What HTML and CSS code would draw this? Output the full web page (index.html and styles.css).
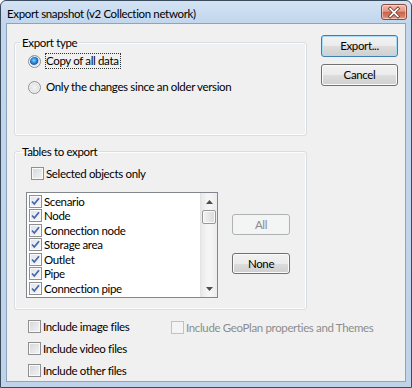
FILE: index.html
```html
<!DOCTYPE html>
<html>
<head>
<meta charset="utf-8">
<link rel="stylesheet" href="styles.css">
</head>
<body>
<div class="window">
  <div class="titlebar">
    <span class="title">Export snapshot (v2 Collection network)</span>
    <span class="close">
      <svg width="25" height="15" viewBox="0 0 25 15">
        <path d="M8.5 3.5 L16.5 11.5 M16.5 3.5 L8.5 11.5" stroke="#6b3a30" stroke-width="3.4" stroke-linecap="square"/>
        <path d="M8.5 3.5 L16.5 11.5 M16.5 3.5 L8.5 11.5" stroke="#ffffff" stroke-width="1.8" stroke-linecap="square"/>
      </svg>
    </span>
  </div>
  <div class="client">
    <div class="main">
      <div class="left">
        <fieldset class="group g1">
          <legend>Export type</legend>
          <div class="g1-body">
            <div class="opt-row"><span class="radio on"></span><span class="lbl focus">Copy of all data</span></div>
            <div class="opt-row second"><span class="radio"></span><span class="lbl">Only the changes since an older version</span></div>
          </div>
        </fieldset>
        <fieldset class="group g2">
          <legend>Tables to export</legend>
          <div class="g2-body">
            <div class="sel-row"><span class="chk"></span><span class="sel-lbl">Selected objects only</span></div>
            <div class="list-area">
              <div class="listbox">
                <div class="items">
                  <div class="item"><span class="chk on"><svg width="11" height="11" viewBox="0 0 11 11"><path d="M2 5.5 L4.3 8 L9 2.2" fill="none" stroke="#4864a8" stroke-width="1.7"/></svg></span>Scenario</div>
                  <div class="item"><span class="chk on"><svg width="11" height="11" viewBox="0 0 11 11"><path d="M2 5.5 L4.3 8 L9 2.2" fill="none" stroke="#4864a8" stroke-width="1.7"/></svg></span>Node</div>
                  <div class="item"><span class="chk on"><svg width="11" height="11" viewBox="0 0 11 11"><path d="M2 5.5 L4.3 8 L9 2.2" fill="none" stroke="#4864a8" stroke-width="1.7"/></svg></span>Connection node</div>
                  <div class="item"><span class="chk on"><svg width="11" height="11" viewBox="0 0 11 11"><path d="M2 5.5 L4.3 8 L9 2.2" fill="none" stroke="#4864a8" stroke-width="1.7"/></svg></span>Storage area</div>
                  <div class="item"><span class="chk on"><svg width="11" height="11" viewBox="0 0 11 11"><path d="M2 5.5 L4.3 8 L9 2.2" fill="none" stroke="#4864a8" stroke-width="1.7"/></svg></span>Outlet</div>
                  <div class="item"><span class="chk on"><svg width="11" height="11" viewBox="0 0 11 11"><path d="M2 5.5 L4.3 8 L9 2.2" fill="none" stroke="#4864a8" stroke-width="1.7"/></svg></span>Pipe</div>
                  <div class="item"><span class="chk on"><svg width="11" height="11" viewBox="0 0 11 11"><path d="M2 5.5 L4.3 8 L9 2.2" fill="none" stroke="#4864a8" stroke-width="1.7"/></svg></span>Connection pipe</div>
                </div>
                <div class="vscroll">
                  <div class="arrow up"><svg width="7" height="4" viewBox="0 0 7 4"><path d="M0 4 L3.5 0 L7 4 Z" fill="#4d4d4d"/></svg></div>
                  <div class="track"><div class="thumb"></div></div>
                  <div class="arrow down"><svg width="7" height="4" viewBox="0 0 7 4"><path d="M0 0 L7 0 L3.5 4 Z" fill="#4d4d4d"/></svg></div>
                </div>
              </div>
              <div class="list-buttons">
                <button class="btn small disabled">All</button>
                <button class="btn small">None</button>
              </div>
            </div>
          </div>
        </fieldset>
      </div>
      <div class="right">
        <button class="btn big default">Export...</button>
        <button class="btn big">Cancel</button>
      </div>
    </div>
    <div class="bottom-opts">
      <div class="b-row"><span class="chk"></span><span class="b-lbl">Include image files</span></div>
      <div class="b-row geo"><span class="chk dis"></span><span class="b-lbl grey">Include GeoPlan properties and Themes</span></div>
      <div class="b-row"><span class="chk"></span><span class="b-lbl">Include video files</span></div>
      <div class="b-row empty"></div>
      <div class="b-row"><span class="chk"></span><span class="b-lbl">Include other files</span></div>
    </div>
  </div>
</div>
</body>
</html>
```

FILE: styles.css
```css
* { box-sizing: border-box; }
html, body { margin: 0; padding: 0; }
body {
  width: 412px;
  height: 388px;
  overflow: hidden;
  font-family: Lato, "Liberation Sans", sans-serif;
  font-size: 11.5px;
  letter-spacing: -0.35px;
  color: #000;
  background: #fff;
}
.window {
  width: 412px;
  height: 388px;
  border: 1px solid #3b4b5e;
  border-radius: 6px 6px 0 0;
  background: linear-gradient(#d3e3f4 0px, #c2d6ec 22px, #bfd4ea 100%);
  padding: 0 5px 5px 5px;
  display: flex;
  flex-direction: column;
}
.titlebar {
  height: 22px;
  display: flex;
  align-items: flex-start;
  justify-content: space-between;
  margin: 0 -5px;
  padding: 0 4px 0 6px;
}
.title {
  line-height: 22px;
  padding-top: 2px;
  white-space: nowrap;
}
.close {
  margin-top: 3px;
  width: 26px;
  height: 16px;
  border: 1px solid #8a4a3e;
  border-radius: 3px;
  background: linear-gradient(#efb8a8 0%, #e39a86 45%, #c8614a 50%, #d77c63 80%, #e6a28d 100%);
  box-shadow: inset 0 0 0 1px rgba(255,255,255,0.45);
  display: flex;
  align-items: center;
  justify-content: center;
}
.close svg { display: block; }
.client {
  flex: 1;
  border: 1px solid #8ea3bd;
  background: #f0f0f0;
  padding: 11px 0 0 7px;
}
.main {
  display: flex;
  align-items: flex-start;
}
.left {
  width: 293px;
  display: flex;
  flex-direction: column;
}
.group {
  margin: 0;
  padding: 0;
  border: 1px solid #d5dfe5;
  border-radius: 3px;
  box-shadow: inset 0 0 0 1px #fbfcfc;
  min-width: 0;
}
.group legend {
  margin-left: 5px;
  padding: 0 2px;
  line-height: 15px;
  height: 15px;
}
.g1-body {
  padding: 3px 0 40px 13px;
}
.opt-row {
  height: 16px;
  display: flex;
  align-items: center;
}
.opt-row.second { margin-top: 10px; }
.radio {
  width: 13px;
  height: 13px;
  border-radius: 50%;
  border: 1px solid #8e9296;
  background: radial-gradient(circle at 50% 50%, #f6f6f6 0%, #e2e3e5 55%, #cfd1d4 100%);
  box-shadow: inset 0 0 0 1px #f4f4f4;
  margin-right: 4px;
  flex: none;
}
.radio.on {
  background: radial-gradient(circle at 45% 40%, #8fd3ff 0%, #2f8ad6 28%, #1b5ea8 45%, #dfe7ee 55%, #d2d6da 100%);
}
.lbl {
  border: 1px dotted transparent;
  padding: 0 1px 0 0;
  line-height: 14px;
  white-space: nowrap;
}
.lbl.focus { border-color: #333; }
.g2 { margin-top: 8px; }
.g2-body {
  padding: 6px 0 11px 11px;
}
.sel-row {
  height: 16px;
  display: flex;
  align-items: center;
  margin-left: 5px;
}
.sel-lbl { margin-left: 2px; }
.chk {
  width: 13px;
  height: 13px;
  border: 1px solid #8f8f8f;
  background: linear-gradient(135deg, #d4d6d9 0%, #f4f4f4 100%);
  box-shadow: inset 0 0 0 1px #f9f9f9;
  flex: none;
  display: flex;
  align-items: center;
  justify-content: center;
}
.chk svg { display: block; }
.chk.on {
  background: linear-gradient(135deg, #dfe4ec 0%, #f7f8fa 100%);
}
.chk.dis {
  border-color: #c2c2c2;
  background: #f4f4f4;
  box-shadow: none;
}
.list-area {
  margin-top: 11px;
  display: flex;
  align-items: flex-start;
}
.listbox {
  width: 192px;
  height: 106px;
  border: 1px solid #82878f;
  background: #fff;
  display: flex;
}
.items {
  flex: 1;
  padding-top: 1px;
}
.item {
  height: 14.5px;
  display: flex;
  align-items: center;
  padding-left: 2px;
  white-space: nowrap;
}
.item .chk { margin-right: 2px; }
.vscroll {
  width: 17px;
  height: 104px;
  border-left: 1px solid #e3e3e3;
  background: linear-gradient(90deg, #e9e9e9, #f5f5f5 40%, #f5f5f5 60%, #ececec);
  display: flex;
  flex-direction: column;
}
.arrow {
  height: 17px;
  display: flex;
  align-items: center;
  justify-content: center;
}
.arrow svg { display: block; }
.track { flex: 1; }
.thumb {
  margin: 0 1px 0 1px;
  height: 14px;
  border: 1px solid #979797;
  border-radius: 2px;
  background: linear-gradient(90deg, #f3f3f3, #e6e6e6 50%, #d9d9d9);
  box-shadow: inset 0 0 0 1px #fafafa;
}
.list-buttons {
  margin-left: 14px;
  padding-top: 22px;
  display: flex;
  flex-direction: column;
  gap: 18px;
}
.btn {
  font-family: inherit;
  font-size: 11.5px;
  letter-spacing: -0.35px;
  color: #000;
  border: 1px solid #707070;
  border-radius: 3px;
  background: linear-gradient(#f2f2f2 0%, #ebebeb 50%, #dddddd 51%, #cfcfcf 100%);
  box-shadow: inset 0 0 0 1px #fbfbfb;
  padding: 0;
  margin: 0;
  line-height: 18px;
}
.btn.small { width: 58px; height: 21px; }
.btn.big { width: 77px; height: 22px; }
.btn.disabled {
  border-color: #adb2b5;
  background: #f4f4f4;
  box-shadow: none;
  color: #8b8b8b;
}
.btn.default {
  border-color: #3c7fb1;
  box-shadow: inset 0 0 0 1px #a9dcf7;
}
.right {
  margin-left: 14px;
  display: flex;
  flex-direction: column;
  gap: 7px;
}
.bottom-opts {
  margin-top: 5px;
  padding-left: 14px;
  display: grid;
  grid-template-columns: 143px auto;
  grid-auto-rows: 22px;
}
.b-row {
  display: flex;
  align-items: center;
}
.b-row.geo { padding-top: 2px; }
.b-lbl { margin-left: 2px; white-space: nowrap; }
.b-lbl.grey { color: #8d8d8d; }
```
